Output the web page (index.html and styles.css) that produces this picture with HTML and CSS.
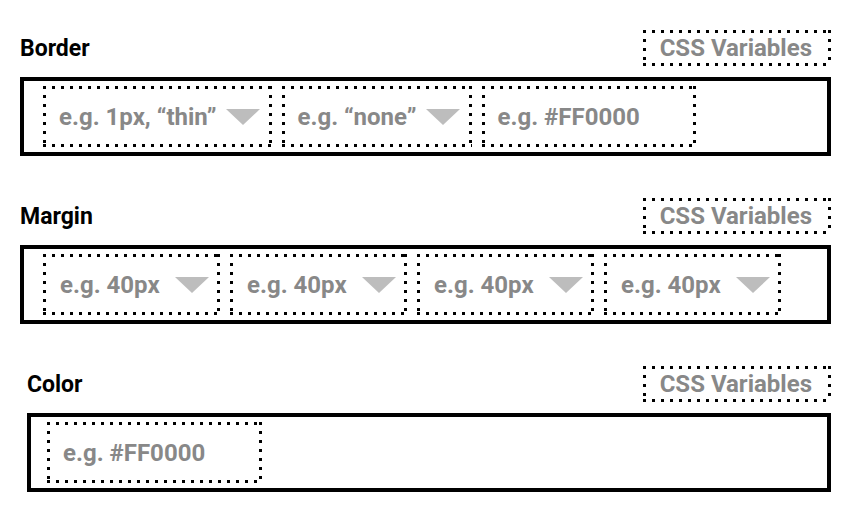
FILE: index.html
```html
<!DOCTYPE html>
<html>
<head>
<meta charset="utf-8">
<title>Style fields</title>
<link rel="stylesheet" href="styles.css">
</head>
<body>

<!-- border -->
<div class="section">
  <div class="sectionHead">
    <span class="sectionTitle">Border</span>
    <span class="varsButton dotted">CSS Variables</span>
  </div>
  <div class="fieldRow">
    <div class="field dotted">
      <span class="hint">e.g. 1px, &ldquo;thin&rdquo;</span>
      <span class="arrow"></span>
    </div>
    <div class="field dotted">
      <span class="hint">e.g. &ldquo;none&rdquo;</span>
      <span class="arrow"></span>
    </div>
    <div class="field fieldColor dotted">
      <span class="hint">e.g. #FF0000</span>
    </div>
  </div>
</div>

<!-- margin -->
<div class="section">
  <div class="sectionHead">
    <span class="sectionTitle">Margin</span>
    <span class="varsButton dotted">CSS Variables</span>
  </div>
  <div class="fieldRow">
    <div class="field fieldSize dotted">
      <span class="hint">e.g. 40px</span>
      <span class="arrow"></span>
    </div>
    <div class="field fieldSize dotted">
      <span class="hint">e.g. 40px</span>
      <span class="arrow"></span>
    </div>
    <div class="field fieldSize dotted">
      <span class="hint">e.g. 40px</span>
      <span class="arrow"></span>
    </div>
    <div class="field fieldSize dotted">
      <span class="hint">e.g. 40px</span>
      <span class="arrow"></span>
    </div>
  </div>
</div>

<!-- color -->
<div class="section sectionColor">
  <div class="sectionHead">
    <span class="sectionTitle">Color</span>
    <span class="varsButton dotted">CSS Variables</span>
  </div>
  <div class="fieldRow fieldRowColor">
    <div class="field fieldColor dotted">
      <span class="hint">e.g. #FF0000</span>
    </div>
  </div>
</div>

</body>
</html>
```

FILE: styles.css
```css
body {
  margin: 0;
  padding-top: 30px;
  background: #fff;
  font-family: Roboto, "Liberation Sans", sans-serif;
  font-weight: bold;
  font-size: 24px;
}

/* square dots, wider apart than the browser's own dotted border */
.dotted {
  border: 3px solid transparent;
  background:
    repeating-linear-gradient(90deg, #000 0 3px, transparent 3px 9px) left top / 100% 3px no-repeat border-box,
    repeating-linear-gradient(90deg, #000 0 3px, transparent 3px 9px) left bottom / 100% 3px no-repeat border-box,
    repeating-linear-gradient(180deg, #000 0 3px, transparent 3px 9px) left top / 3px 100% no-repeat border-box,
    repeating-linear-gradient(180deg, #000 0 3px, transparent 3px 9px) right top / 3px 100% no-repeat border-box;
}

.section {
  margin: 0 23px 42px 20px;
}

.sectionColor {
  margin-left: 27px;
}

.sectionHead {
  display: flex;
  justify-content: space-between;
  align-items: center;
  height: 36px;
  margin-bottom: 11px;
}

.sectionTitle {
  color: #000;
  font-size: 23px;
}

.varsButton {
  color: #888;
  height: 30px;
  line-height: 30px;
  padding: 0 16px 0 14px;
}

.fieldRow {
  display: flex;
  gap: 10px;
  border: 4px solid #000;
  padding: 5px 19px;
}

.fieldRowColor {
  padding: 5px 16px;
}

.field {
  display: flex;
  align-items: center;
  gap: 9px;
  height: 55px;
  padding: 0 9px 0 13px;
}

.fieldColor {
  width: 186px;
}

.sectionColor .fieldColor {
  width: 187px;
}

.fieldSize {
  width: 149px;
  padding: 0 8px 0 14px;
  justify-content: space-between;
}

.hint {
  color: #888;
  white-space: nowrap;
}

.arrow {
  width: 0;
  height: 0;
  border-left: 17px solid transparent;
  border-right: 17px solid transparent;
  border-top: 16px solid #bdbdbd;
}
```
